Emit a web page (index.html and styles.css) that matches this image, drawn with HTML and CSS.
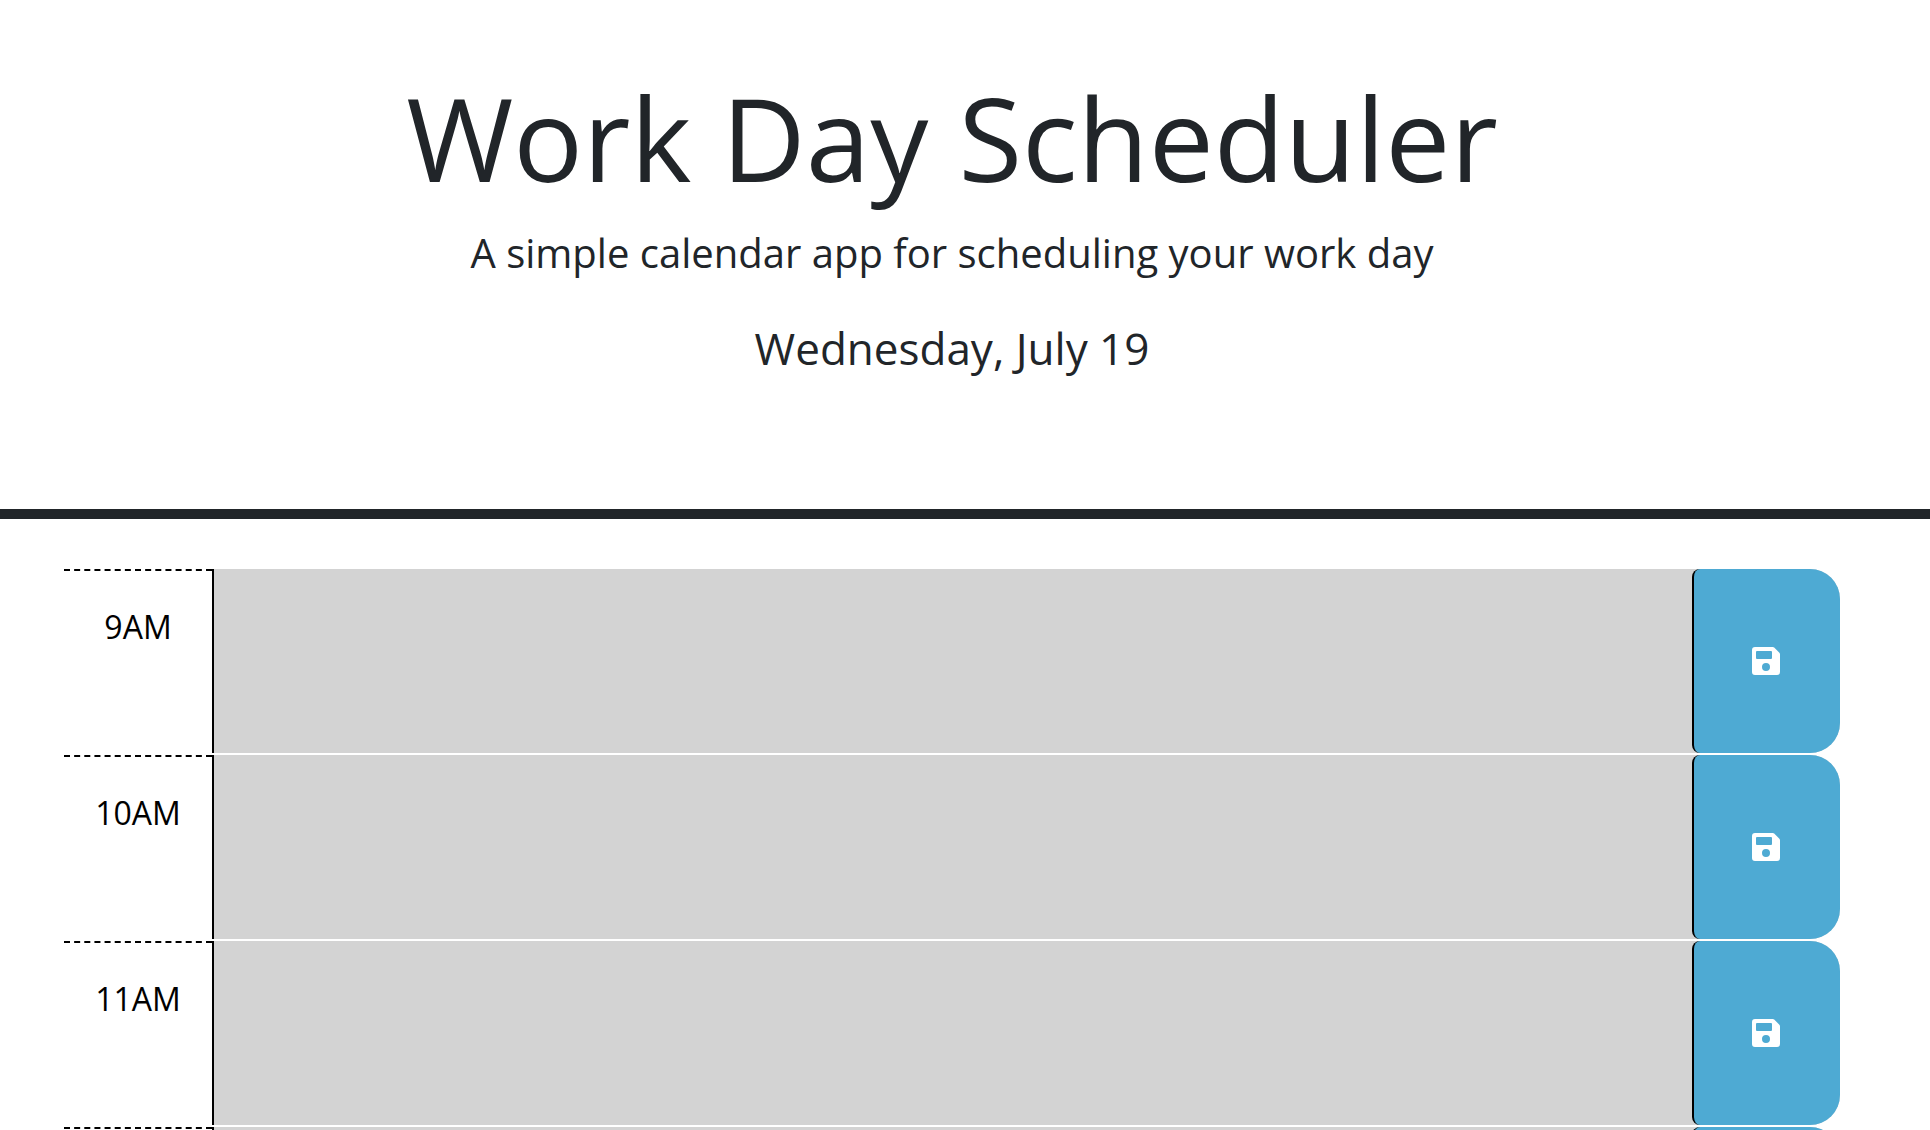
FILE: index.html
```html
<!DOCTYPE html>
<html lang="en">
<head>
  <meta charset="utf-8">
  <meta name="viewport" content="width=device-width, initial-scale=1">
  <title>Work Day Scheduler</title>
  <link rel="stylesheet" href="styles.css">
</head>
<body>
  <svg class="sprite" aria-hidden="true">
    <symbol id="save" viewBox="0 0 28 28">
      <path fill-rule="evenodd" d="M3 0H20.800Q21.600 0 22.200 .6L27.400 5.800Q28 6.400 28 7.200V25Q28 28 25 28H3Q0 28 0 25V3Q0 0 3 0ZM5 4Q4 4 4 5V11Q4 12 5 12H19Q20 12 20 11V5Q20 4 19 4ZM14 16A4 4 0 1 0 14 24A4 4 0 1 0 14 16Z"/>
    </symbol>
  </svg>

  <header class="header">
    <h1 class="title">Work Day Scheduler</h1>
    <p class="lead">A simple calendar app for scheduling your work day</p>
    <p class="date">Wednesday, July 19</p>
  </header>

  <main class="schedule">
    <div class="time-block">
      <label class="hour" for="hour-9">9AM</label>
      <textarea class="description" id="hour-9"></textarea>
      <button class="save-btn" type="button" aria-label="save"><svg class="icon"><use href="#save"/></svg></button>
    </div>
    <div class="time-block">
      <label class="hour" for="hour-10">10AM</label>
      <textarea class="description" id="hour-10"></textarea>
      <button class="save-btn" type="button" aria-label="save"><svg class="icon"><use href="#save"/></svg></button>
    </div>
    <div class="time-block">
      <label class="hour" for="hour-11">11AM</label>
      <textarea class="description" id="hour-11"></textarea>
      <button class="save-btn" type="button" aria-label="save"><svg class="icon"><use href="#save"/></svg></button>
    </div>
    <div class="time-block">
      <label class="hour" for="hour-12">12PM</label>
      <textarea class="description" id="hour-12"></textarea>
      <button class="save-btn" type="button" aria-label="save"><svg class="icon"><use href="#save"/></svg></button>
    </div>
  </main>
</body>
</html>
```
FILE: styles.css
```css
* {
  box-sizing: border-box;
}

html {
  scrollbar-width: none;
}

body {
  margin: 0;
  background: #fff;
  color: #212529;
  font-family: "Open Sans", sans-serif;
}

.sprite {
  display: none;
}

.header {
  display: flex;
  flex-direction: column;
  padding: 64px 90px 127px 64px;
  border-bottom: 10px solid #212529;
  text-align: center;
}

.title {
  margin: 0 0 12px;
  font-size: 116px;
  font-weight: 400;
  line-height: 146px;
}

.lead {
  margin: 0 0 30px;
  font-size: 40px;
  line-height: 62px;
}

.date {
  margin: 0;
  font-size: 44px;
  line-height: 68px;
}

.schedule {
  display: flex;
  flex-direction: column;
  gap: 2px;
  padding: 50px 90px 50px 64px;
}

.time-block {
  display: grid;
  grid-template-columns: 1fr 10fr 1fr;
  min-height: 184px;
  border-radius: 0 30px 30px 0;
  background: #d3d3d3;
}

.hour {
  padding-top: 32px;
  border-top: 2px dashed #000;
  background: #fff;
  color: #000;
  font-size: 32px;
  line-height: 48px;
  text-align: center;
}

.description {
  display: block;
  width: 100%;
  margin: 0;
  padding: 16px;
  border: 0;
  border-left: 2px solid #000;
  border-radius: 0;
  outline: 0;
  background: #d3d3d3;
  color: #000;
  font: inherit;
  font-size: 32px;
  resize: none;
}

.save-btn {
  display: flex;
  align-items: center;
  justify-content: center;
  padding: 0 2px 0 0;
  border: 0;
  border-left: 2px solid #000;
  border-radius: 8px 30px 30px 8px;
  background: #4eaad3;
  color: #fff;
  cursor: pointer;
}

.save-btn:hover {
  color: #000;
}

.icon {
  width: 28px;
  height: 28px;
  fill: currentColor;
}
```
